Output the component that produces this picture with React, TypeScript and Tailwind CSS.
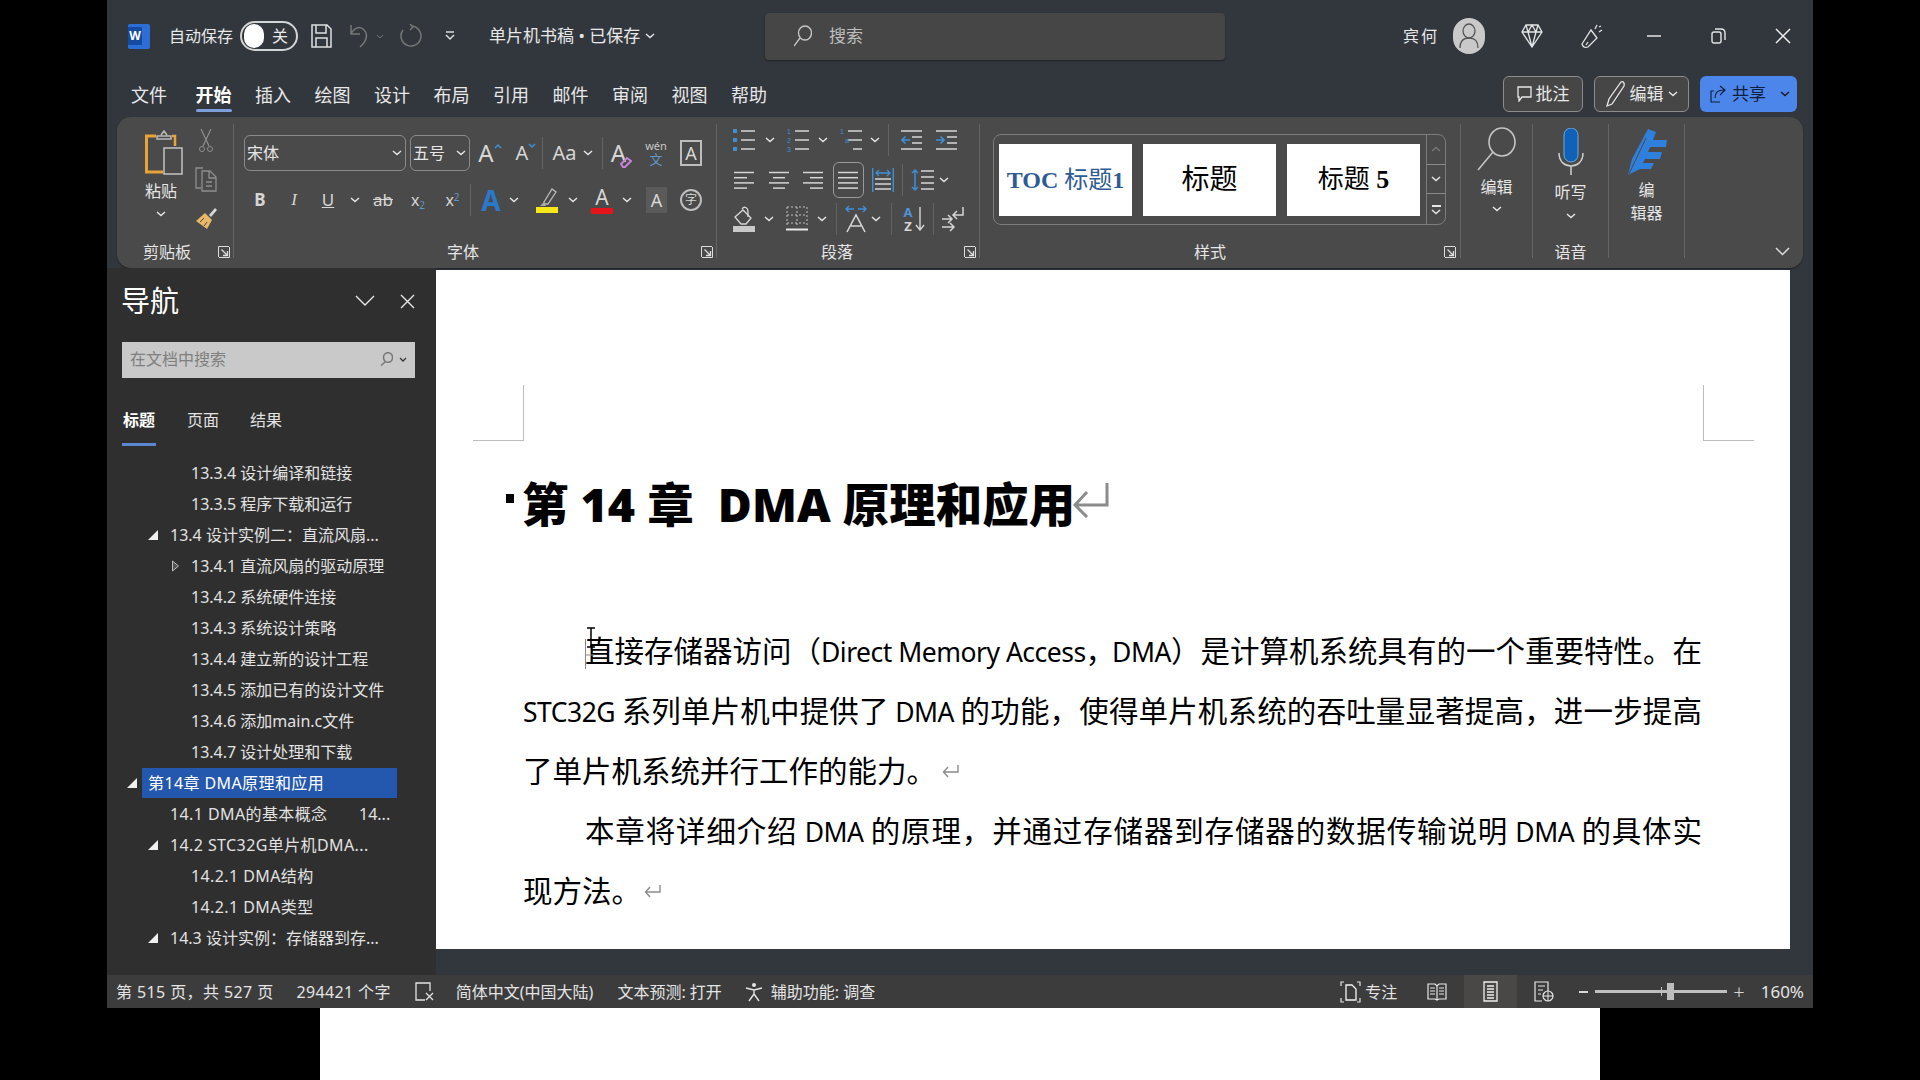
import React from "react";

const I = "#d6d6d6";
const BLUE = "#3f8fd6";

const Chev = ({ c = "" }: { c?: string }) => (
  <svg width="10" height="6" viewBox="0 0 10 6" className={`shrink-0 ${c}`}>
    <path d="M1 1l4 3.5L9 1" stroke="#e4e4e4" strokeWidth="1.5" fill="none" />
  </svg>
);

const Launcher = ({ c = "" }: { c?: string }) => (
  <svg width="12" height="12" viewBox="0 0 12 12" className={`shrink-0 ${c}`}>
    <path d="M.5 11V.5H11" stroke="#ddd" fill="none" />
    <path d="M3.5 3.5l6 6M9.5 5v4.5H5" stroke="#ddd" strokeWidth="1.3" fill="none" />
    <path d="M1 11.5h10.5V1" stroke="#ddd" fill="none" />
  </svg>
);

const Lines = ({ kind }: { kind: "left" | "center" | "right" | "full" }) => {
  const rows = {
    left: [[0, 20], [0, 13], [0, 20], [0, 13]],
    center: [[0, 20], [4, 16], [0, 20], [4, 16]],
    right: [[0, 20], [7, 20], [0, 20], [7, 20]],
    full: [[0, 20], [0, 20], [0, 20], [0, 20]],
  }[kind];
  return (
    <svg width="21" height="21" viewBox="0 0 21 21" className="shrink-0">
      {rows.map((r, i) => (
        <path key={i} d={`M${r[0]} ${2.5 + i * 5.2}H${r[1]}`} stroke={I} strokeWidth="1.5" />
      ))}
    </svg>
  );
};

const ListIcon = ({ type }: { type: "bullet" | "num" | "multi" }) => (
  <svg width="22" height="26" viewBox="0 0 22 26" className="shrink-0">
    {[4, 13, 22].map((y, i) => (
      <path key={y} d={`M${type === "multi" && i === 2 ? 13 : 8} ${y}H22`} stroke={I} strokeWidth="1.5" />
    ))}
    {type === "bullet" && [4, 13, 22].map((y) => <rect key={y} x="0" y={y - 2} width="4" height="4" fill={BLUE} />)}
    {type !== "bullet" && (
      <g fill={BLUE} fontSize="7" fontFamily="Liberation Sans">
        <text x="0" y="7">1</text>
        <text x={type === "multi" ? 5 : 0} y="16">{type === "multi" ? "a" : "2"}</text>
        {type === "num" && <text x="0" y="25">3</text>}
      </g>
    )}
  </svg>
);

const Indent = ({ out }: { out?: boolean }) => (
  <svg width="21" height="24" viewBox="0 0 21 24" className="shrink-0">
    <path d="M0 3h21M11 9h10M11 15h10M0 21h21" stroke={I} strokeWidth="1.5" />
    <path d={out ? "M9 12H1m3.500-3.500L1 12l3.500 3.500" : "M0 12h8m-3.500-3.500L8 12l-3.500 3.500"} stroke={BLUE} strokeWidth="1.600" fill="none" />
  </svg>
);

const Sep = ({ c = "" }: { c?: string }) => <div className={`w-px h-[32px] bg-[#636363] shrink-0 ${c}`} />;

const Group = ({ w, children, label }: { w: string; children?: React.ReactNode; label?: string }) => (
  <div className={`${w} h-[134px] shrink-0 flex flex-col border-r border-[#666]`}>
    <div className="h-[116px] shrink-0">{children}</div>
    <div className="h-[24px] shrink-0 flex items-center justify-center text-[16px] text-[#e6e6e6]">
      <span>{label}</span>
    </div>
  </div>
);

const ClipboardGroup = () => (
  <div className="w-[117px] h-[134px] shrink-0 flex flex-col border-r border-[#666]">
    <div className="h-[116px] flex shrink-0">
      <div className="ml-[24px] w-[40px] flex flex-col items-center">
        <svg width="38" height="46" viewBox="0 0 38 46" className="mt-[6px] ml-[6px] shrink-0">
          <path d="M11 6H1.500v36H18" stroke="#e9a436" strokeWidth="3" fill="none" />
          <path d="M12 6h14v3H12zM16 5l3-4 3 4" stroke="#bbb" strokeWidth="1.500" fill="none" />
          <path d="M27 6h3v10" stroke="#e9a436" strokeWidth="2.500" fill="none" />
          <rect x="19" y="18" width="18" height="26" fill="#4a4a4a" stroke="#c4c4c4" strokeWidth="1.500" />
        </svg>
        <span className="text-[16px] leading-[20px] mt-[5px] text-[#e6e6e6]">粘贴</span>
        <Chev c="mt-[10px]" />
      </div>
      <div className="ml-[13px] w-[24px] flex flex-col items-center">
        <svg width="14" height="24" viewBox="0 0 14 24" className="mt-[5px]">
          <path d="M2 0l8 17M12 0L4 17" stroke="#8e8e8e" strokeWidth="1.200" fill="none" />
          <circle cx="3" cy="20" r="2.500" stroke="#8e8e8e" fill="none" />
          <circle cx="11" cy="20" r="2.500" stroke="#8e8e8e" fill="none" />
        </svg>
        <svg width="22" height="25" viewBox="0 0 22 25" className="mt-[14px]">
          <path d="M6 21H1V1h7" stroke="#8e8e8e" strokeWidth="1.300" fill="none" />
          <path d="M7 4h8l6 6v14H7zM14 4v7h7M11 15h6M11 19h6" stroke="#8e8e8e" strokeWidth="1.300" fill="none" />
        </svg>
        <svg width="23" height="24" viewBox="0 0 23 24" className="mt-[14px]">
          <path d="M14 9l6-7 2 2-6 7z" fill="#d8d8d8" />
          <path d="M10 7l7 7-5 9-11-8z" fill="#e8b868" />
          <path d="M5 16l4-4M9 20l3-4" stroke="#4a4a4a" />
        </svg>
      </div>
    </div>
    <div className="h-[24px] shrink-0 flex items-center text-[16px] text-[#e6e6e6]">
      <span className="ml-[26px]">剪贴板</span>
      <Launcher c="ml-[27px]" />
    </div>
  </div>
);

const FontGroup = () => (
  <div className="w-[483px] h-[134px] shrink-0 flex flex-col border-r border-[#666] text-[#d6d6d6]">
    <div className="h-[116px] shrink-0 pt-[11px]">
      <div className="flex h-[36px] items-center">
        <div className="ml-[10px] w-[162px] h-[36px] border border-[#8a8a8a] rounded-md flex items-center justify-between pl-[2px] pr-[3px] text-[16px] text-[#e6e6e6]">
          <span>宋体</span><Chev />
        </div>
        <div className="ml-[4px] w-[60px] h-[36px] border border-[#8a8a8a] rounded-md flex items-center justify-between pl-[2px] pr-[3px] text-[16px] text-[#e6e6e6]">
          <span>五号</span><Chev />
        </div>
        <div className="w-[40px] flex justify-center items-start">
          <span className="text-[24px] leading-[32px]">A</span>
          <svg width="8" height="6" viewBox="0 0 8 6" className="mt-[6px]"><path d="M1 5l3-3 3 3" stroke={BLUE} strokeWidth="1.500" fill="none" /></svg>
        </div>
        <div className="w-[32px] flex justify-center items-start">
          <span className="text-[20px] leading-[32px]">A</span>
          <svg width="8" height="6" viewBox="0 0 8 6" className="mt-[6px]"><path d="M1 1l3 3 3-3" stroke={BLUE} strokeWidth="1.500" fill="none" /></svg>
        </div>
        <Sep />
        <div className="w-[59px] flex justify-center items-center gap-[6px]">
          <span className="text-[20px] leading-[28px]">Aa</span><Chev />
        </div>
        <Sep />
        <div className="w-[37px] flex justify-center">
          <div className="flex items-end">
            <span className="text-[24px] leading-[30px]">A</span>
            <svg width="12" height="12" viewBox="0 0 12 12" className="-ml-[6px]">
              <path d="M1 8l6-6 4 3-6 6H3z" fill="none" stroke="#c583d6" strokeWidth="2" />
            </svg>
          </div>
        </div>
        <div className="w-[32px] flex flex-col items-center">
          <span className="text-[11px] leading-[13px] text-[#c8c8c8]">wén</span>
          <span className="text-[13px] leading-[15px] text-[#5f97c9]">文</span>
        </div>
        <div className="ml-[8px] w-[22px] h-[26px] border-2 border-[#bdbdbd] flex items-center justify-center text-[18px] leading-[22px]">A</div>
      </div>
      <div className="flex h-[30px] mt-[14px] items-center">
        <div className="ml-[9px] w-[34px] text-center text-[17px] font-bold">B</div>
        <div className="w-[34px] text-center text-[17px] italic [font-family:'Liberation_Serif',serif]">I</div>
        <div className="w-[34px] text-center text-[17px] underline">U</div>
        <div className="w-[20px] flex justify-center"><Chev /></div>
        <div className="w-[36px] text-center text-[17px] line-through">ab</div>
        <div className="w-[34px] text-center text-[16px]">x<sub className="text-[10px] text-[#5f97c9]">2</sub></div>
        <div className="w-[35px] text-center text-[16px]">x<sup className="text-[10px] text-[#5f97c9]">2</sup></div>
        <Sep />
        <div className="ml-[3px] w-[34px] text-center text-[28px] leading-[30px] font-bold text-[#2b78c8]">A</div>
        <Chev c="ml-[1px]" />
        <div className="ml-[13px] w-[30px] flex justify-center">
          <svg width="22" height="26" viewBox="0 0 22 26">
            <path d="M8 15L16 2l4 3-8 12H8z" stroke="#bbb" strokeWidth="1.300" fill="none" />
            <path d="M8 15l-4 4h6z" fill="#aaa" />
            <rect x="0" y="20" width="22" height="6" fill="#f6e719" />
          </svg>
        </div>
        <Chev c="ml-[6px]" />
        <div className="ml-[9px] w-[30px] flex flex-col items-center">
          <span className="text-[21px] leading-[21px]">A</span>
          <div className="w-[22px] h-[6px] bg-[#e5141a]" />
        </div>
        <Chev c="ml-[5px]" />
        <div className="ml-[14px] w-[21px] h-[26px] bg-[#5a5a5a] flex items-center justify-center text-[18px]">A</div>
        <div className="ml-[13px] w-[22px] h-[22px] rounded-full border-2 border-[#bdbdbd] flex items-center justify-center text-[12px]">字</div>
      </div>
    </div>
    <div className="h-[24px] shrink-0 flex items-center text-[16px] text-[#e6e6e6]">
      <span className="ml-[213px]">字体</span>
      <Launcher c="ml-[222px]" />
    </div>
  </div>
);

const ParaGroup = () => (
  <div className="w-[263px] h-[134px] shrink-0 flex flex-col border-r border-[#666]">
    <div className="h-[116px] shrink-0">
      <div className="flex h-[32px] items-center">
        <div className="ml-[16px]"><ListIcon type="bullet" /></div>
        <Chev c="ml-[10px]" />
        <div className="ml-[12px]"><ListIcon type="num" /></div>
        <Chev c="ml-[9px]" />
        <div className="ml-[12px]"><ListIcon type="multi" /></div>
        <Chev c="ml-[8px]" />
        <Sep c="ml-[8px]" />
        <div className="ml-[12px]"><Indent out /></div>
        <div className="ml-[14px]"><Indent /></div>
      </div>
      <div className="flex h-[32px] items-center mt-[8px]">
        <div className="ml-[17px]"><Lines kind="left" /></div>
        <div className="ml-[14px]"><Lines kind="center" /></div>
        <div className="ml-[13px]"><Lines kind="right" /></div>
        <div className="ml-[9px] w-[31px] h-[36px] border border-[#9a9a9a] rounded-md flex items-center justify-center"><Lines kind="full" /></div>
        <svg width="22" height="24" viewBox="0 0 22 24" className="ml-[8px] shrink-0">
          <path d="M.7 0v24M21.300 0v24" stroke={BLUE} strokeWidth="1.400" />
          <path d="M4 5h14m-3-3l3 3-3 3M7 2L4 5l3 3" stroke={BLUE} strokeWidth="1.300" fill="none" />
          <path d="M3 11h16M3 16h16M3 21h16" stroke={I} strokeWidth="1.500" />
        </svg>
        <Sep c="ml-[8px]" />
        <svg width="23" height="24" viewBox="0 0 23 24" className="ml-[8px] shrink-0">
          <path d="M4 2v20M1 5l3-3 3 3M1 19l3 3 3-3" stroke={BLUE} strokeWidth="1.500" fill="none" />
          <path d="M10 3h13M10 9h13M10 15h13M10 21h13" stroke={I} strokeWidth="1.500" />
        </svg>
        <Chev c="ml-[5px]" />
      </div>
      <div className="flex h-[32px] items-center mt-[7px]">
        <svg width="23" height="26" viewBox="0 0 23 26" className="ml-[16px] shrink-0">
          <path d="M2 11l8-7 8 8-5 6-5 0z" stroke="#d8d8d8" strokeWidth="1.300" fill="none" />
          <path d="M9 3c2-3 6-2 6 3v5" stroke="#d8d8d8" strokeWidth="1.300" fill="none" />
          <rect x="0" y="20" width="22" height="6" fill="#c9c9c9" />
        </svg>
        <Chev c="ml-[8px]" />
        <svg width="22" height="26" viewBox="0 0 22 26" className="ml-[12px] shrink-0">
          <path d="M1 1h20M1 9h20M1 17h20M1 1v19M11 1v19M21 1v19" stroke="#c0c0c0" strokeDasharray="2 2" />
          <path d="M0 23.500h22" stroke="#e8e8e8" strokeWidth="2" />
        </svg>
        <Chev c="ml-[9px]" />
        <Sep c="ml-[9px]" />
        <svg width="22" height="28" viewBox="0 0 22 28" className="ml-[8px] shrink-0">
          <path d="M1 4h8M4 1L1 4l3 3M21 4h-8M18 1l3 3-3 3" stroke={BLUE} strokeWidth="1.400" fill="none" />
          <path d="M2 27l9-17 9 17M6 21h10" stroke={I} strokeWidth="1.600" fill="none" />
        </svg>
        <Chev c="ml-[4px]" />
        <Sep c="ml-[10px]" />
        <div className="ml-[10px] w-[12px] flex flex-col items-center text-[13px] font-bold">
          <span className="h-[14px] leading-[14px] text-[#4c94d8]">A</span><span className="h-[14px] leading-[14px] text-[#d6d6d6]">Z</span>
        </div>
        <svg width="10" height="24" viewBox="0 0 10 24" className="ml-[1px] shrink-0"><path d="M5 0v23M1 18l4 5 4-5" stroke={I} strokeWidth="1.400" fill="none" /></svg>
        <Sep c="ml-[8px]" />
        <svg width="22" height="26" viewBox="0 0 22 26" className="ml-[8px] shrink-0">
          <path d="M21 1v8h-9M15 5l-4 4 4 4" stroke={I} strokeWidth="1.500" fill="none" />
          <path d="M0 13h9M6 9l4 4-4 4M0 21h12M8 17l4 4-4 4" stroke={I} strokeWidth="1.500" fill="none" />
        </svg>
      </div>
    </div>
    <div className="h-[24px] shrink-0 flex items-center text-[16px] text-[#e6e6e6]">
      <span className="ml-[104px]">段落</span>
      <Launcher c="ml-[111px]" />
    </div>
  </div>
);

const StyleTile = ({ children, c }: { children: React.ReactNode; c: string }) => (
  <div className={`w-[133px] h-[72px] bg-white flex items-center justify-center whitespace-pre [font-family:'Liberation_Serif','Noto_Sans_CJK_SC',serif] ${c}`}>{children}</div>
);

const StylesGroup = () => (
  <div className="w-[481px] h-[134px] shrink-0 flex flex-col border-r border-[#666]">
    <div className="h-[116px] shrink-0 pt-[10px]">
      <div className="ml-[13px] w-[453px] h-[91px] border border-[#7c7c7c] rounded-lg flex items-center pl-[5px]">
        <StyleTile c="text-[#2f5b94] text-[24px]"><b>TOC </b>标题<b>1</b></StyleTile>
        <StyleTile c="ml-[11px] text-black text-[28px]">标题</StyleTile>
        <StyleTile c="ml-[11px] text-black text-[26px]">标题 <b>5</b></StyleTile>
        <div className="ml-[6px] w-[19px] h-[91px] border-l border-[#7c7c7c] flex flex-col">
          <div className="h-[31px] flex items-center justify-center border-b border-[#8a8a8a]">
            <svg width="10" height="6" viewBox="0 0 10 6"><path d="M1 5l4-3.500L9 5" stroke="#777" strokeWidth="1.500" fill="none" /></svg>
          </div>
          <div className="h-[29px] flex items-center justify-center border-b border-[#8a8a8a]"><Chev /></div>
          <div className="flex-1 flex flex-col items-center justify-center gap-[2px]">
            <div className="w-[9px] h-[2px] bg-[#e4e4e4]" />
            <Chev />
          </div>
        </div>
      </div>
    </div>
    <div className="h-[24px] shrink-0 flex items-center text-[16px] text-[#e6e6e6]">
      <span className="ml-[214px]">样式</span>
      <Launcher c="ml-[218px]" />
    </div>
  </div>
);

const Ribbon = () => (
  <div className="mx-[10px] h-[151px] shrink-0 rounded-[14px] bg-[#4a4a4a] flex pt-[7px] shadow-[0_1px_2px_rgba(0,0,0,0.4)]">
    <ClipboardGroup />
    <FontGroup />
    <ParaGroup />
    <StylesGroup />
    <Group w="w-[72px]">
      <div className="flex flex-col items-center text-[16px] text-[#e6e6e6]">
        <svg width="40" height="44" viewBox="0 0 40 44" className="mt-[3px]">
          <ellipse cx="25" cy="15" rx="13" ry="14" stroke="#c4c4c4" strokeWidth="1.600" fill="none" />
          <path d="M16 25L1 43" stroke="#c4c4c4" strokeWidth="1.600" />
        </svg>
        <span className="leading-[20px] mt-[6px]">编辑</span>
        <Chev c="mt-[9px]" />
      </div>
    </Group>
    <Group w="w-[76px]" label="语音">
      <div className="flex flex-col items-center text-[16px] text-[#e6e6e6]">
        <svg width="26" height="48" viewBox="0 0 26 48" className="mt-[4px]">
          <rect x="6" y="0" width="14" height="34" rx="7" fill="#0f62b8" stroke="#72a6dc" />
          <path d="M1 25c0 9 6 13 12 13s12-4 12-13M13 38v9" stroke="#cfcfcf" strokeWidth="1.500" fill="none" />
        </svg>
        <span className="leading-[20px] mt-[6px]">听写</span>
        <Chev c="mt-[11px]" />
      </div>
    </Group>
    <Group w="w-[76px]">
      <div className="flex flex-col items-center text-[16px] leading-[23px] text-[#e6e6e6]">
        <svg width="40" height="48" viewBox="0 0 40 48" className="mt-[4px]">
          <path d="M1 47l4-16L21 1l8 3-3 8h14l-1 7H23l-2 5h14l-2 7H18l-2 4h11l-3 6H13z" fill="#2f7fdc" />
          <path d="M2 46L19 10" stroke="#4a4a4a" />
        </svg>
        <span className="mt-[3px]">编</span>
        <span>辑器</span>
      </div>
    </Group>
    <div className="flex-1 flex items-end justify-end pb-[12px] pr-[13px]">
      <svg width="15" height="9" viewBox="0 0 15 9"><path d="M1 1l6.500 6.500L14 1" stroke="#ddd" strokeWidth="1.500" fill="none" /></svg>
    </div>
  </div>
);

const TitleBar = () => (
  <div className="h-[72px] shrink-0 flex items-center text-[#e8e8e8] text-[16px]">
    <div className="ml-[21px] w-[22px] h-[25px] rounded-[2px] bg-[#2b6fd6] flex items-center">
      <span className="w-[14px] h-[18px] bg-[#154aa3] text-white text-[12px] font-bold leading-[18px] text-center">W</span>
    </div>
    <span className="ml-[19px]">自动保存</span>
    <div className="ml-[7px] w-[58px] h-[30px] rounded-full border-2 border-[#d4d4d4] flex items-center pl-[2px]">
      <div className="w-[20px] h-[24px] rounded-full bg-white" />
      <span className="ml-[8px]">关</span>
    </div>
    <svg width="21" height="24" viewBox="0 0 21 24" className="ml-[13px]">
      <path d="M1 1h15l4 4v18H1zM5 1v8h10V1M5 23v-9h11v9" stroke="#e0e0e0" strokeWidth="1.500" fill="none" />
    </svg>
    <svg width="22" height="24" viewBox="0 0 22 24" className="ml-[17px]">
      <path d="M2 1v9h9M2 10c3-6 8-8 12-5 5 4 5 11-3 18" stroke="#777" strokeWidth="1.500" fill="none" />
    </svg>
    <svg width="8" height="5" viewBox="0 0 8 5" className="ml-[5px]"><path d="M1 1l3 3 3-3" stroke="#777" fill="none" /></svg>
    <svg width="22" height="24" viewBox="0 0 22 24" className="ml-[16px]">
      <path d="M11 2a10 10 0 1 1-8 4M10 0l3 3-3 3" stroke="#777" strokeWidth="1.500" fill="none" />
    </svg>
    <svg width="10" height="10" viewBox="0 0 10 10" className="ml-[23px]">
      <path d="M1 1h8" stroke="#ddd" strokeWidth="1.500" /><path d="M1 4l4 4 4-4" stroke="#ddd" strokeWidth="1.500" fill="none" />
    </svg>
    <span className="ml-[34px] w-[150px] whitespace-nowrap text-[17px]">单片机书稿 • 已保存</span>
    <Chev c="ml-[6px]" />
    <div className="ml-[110px] w-[460px] h-[47px] rounded-[4px] bg-[#464646] shadow-[0_1px_2px_rgba(0,0,0,0.4)] flex items-center">
      <svg width="18" height="22" viewBox="0 0 18 22" className="ml-[29px]">
        <ellipse cx="11" cy="8" rx="6.500" ry="7" stroke="#c8c8c8" strokeWidth="1.300" fill="none" />
        <path d="M6 13l-6 8" stroke="#c8c8c8" strokeWidth="1.300" />
      </svg>
      <span className="ml-[17px] text-[#bdbdbd] text-[17px]">搜索</span>
    </div>
    <span className="ml-[178px] tracking-[2px]">宾何</span>
    <div className="ml-[14px] w-[32px] h-[36px] rounded-full bg-[#c9c9c9] flex items-center justify-center">
      <svg width="22" height="26" viewBox="0 0 22 26">
        <ellipse cx="11" cy="8" rx="6" ry="7" stroke="#555" strokeWidth="1.300" fill="none" />
        <path d="M2 25c0-7 3-10 9-10s9 3 9 10" stroke="#555" strokeWidth="1.300" fill="none" />
      </svg>
    </div>
    <svg width="22" height="24" viewBox="0 0 22 24" className="ml-[36px]">
      <path d="M5 1h12l4 7-10 15L1 8zM1 8h20M7 8l4 15 4-15M5 1l2 7 4-7 4 7 2-7" stroke="#e4e4e4" strokeWidth="1.300" fill="none" />
    </svg>
    <svg width="22" height="26" viewBox="0 0 22 26" className="ml-[38px]">
      <path d="M1 21L10 7l6 8-9 9c-3 1-5 0-6-3zM5 22l2-3" stroke="#e4e4e4" strokeWidth="1.300" fill="none" />
      <path d="M14 6l2-4M18 9l3-2M20 3l-2 1" stroke="#e4e4e4" strokeWidth="1.300" />
    </svg>
    <svg width="14" height="2" viewBox="0 0 14 2" className="ml-[44px]"><path d="M0 1h14" stroke="#e4e4e4" strokeWidth="1.500" /></svg>
    <svg width="15" height="16" viewBox="0 0 15 16" className="ml-[50px]">
      <rect x="1" y="4" width="9" height="11" rx="2" stroke="#e4e4e4" strokeWidth="1.400" fill="none" />
      <path d="M4 1h6c3 0 4 1 4 4v7" stroke="#e4e4e4" strokeWidth="1.400" fill="none" />
    </svg>
    <svg width="16" height="16" viewBox="0 0 16 16" className="ml-[49px]"><path d="M1 1l14 14M15 1L1 15" stroke="#f0f0f0" strokeWidth="1.500" /></svg>
  </div>
);

const tabs = ["文件", "开始", "插入", "绘图", "设计", "布局", "引用", "邮件", "审阅", "视图", "帮助"];

const TabRow = () => (
  <div className="h-[45px] shrink-0 flex text-[18px] text-[#e8e8e8]">
    <div className="ml-[24px] flex gap-[23.500px]">
      {tabs.map((t) => (
        <div key={t} className={`h-[40px] pt-[6px] flex flex-col items-center justify-center relative ${t === "文件" ? "mr-[5px]" : ""}`}>
          <span className={t === "开始" ? "font-bold text-white" : ""}>{t}</span>
          {t === "开始" && <div className="absolute bottom-0 w-[36px] h-[3px] bg-[#7d9fdc] rounded-full" />}
        </div>
      ))}
    </div>
    <div className="ml-auto mr-[16px] mt-[4px] flex gap-[11px] text-[17px]">
      <div className="w-[80px] h-[36px] border border-[#8c8c8c] rounded-md bg-[#464646] flex items-center justify-center gap-[4px]">
        <svg width="15" height="16" viewBox="0 0 15 16"><path d="M1 1h13v10H5l-3 4v-4H1z" stroke="#e8e8e8" strokeWidth="1.300" fill="none" /></svg>
        <span>批注</span>
      </div>
      <div className="w-[95px] h-[36px] border border-[#8c8c8c] rounded-md bg-[#464646] flex items-center justify-center gap-[4px]">
        <svg width="20" height="28" viewBox="0 0 20 28"><path d="M1 26l2-7L15 2c2-1 4 1 3 4L6 24z" stroke="#e8e8e8" strokeWidth="1.300" fill="none" /></svg>
        <span>编辑</span>
        <Chev />
      </div>
      <div className="w-[97px] h-[36px] rounded-md bg-[#4d86ea] text-[#10203c] flex items-center pl-[10px]">
        <svg width="16" height="18" viewBox="0 0 16 18"><path d="M10 1l5 4-5 5M15 5C7 5 5 8 5 13M10 17H1V6h3" stroke="#10203c" strokeWidth="1.200" fill="none" /></svg>
        <span className="ml-[6px]">共享</span>
        <Chev c="ml-[14px] invert" />
      </div>
    </div>
  </div>
);

type Row = { t: string; l: 1 | 2 | 3; tri?: boolean; hollow?: boolean; sel?: boolean; tail?: string };

const rows: Row[] = [
  { t: "13.3.4 设计编译和链接", l: 3 },
  { t: "13.3.5 程序下载和运行", l: 3 },
  { t: "13.4 设计实例二：直流风扇...", l: 2, tri: true },
  { t: "13.4.1 直流风扇的驱动原理", l: 3, hollow: true },
  { t: "13.4.2 系统硬件连接", l: 3 },
  { t: "13.4.3 系统设计策略", l: 3 },
  { t: "13.4.4 建立新的设计工程", l: 3 },
  { t: "13.4.5 添加已有的设计文件", l: 3 },
  { t: "13.4.6 添加main.c文件", l: 3 },
  { t: "13.4.7 设计处理和下载", l: 3 },
  { t: "第14章 DMA原理和应用", l: 1, tri: true, sel: true },
  { t: "14.1 DMA的基本概念", l: 2, tail: "14..." },
  { t: "14.2 STC32G单片机DMA...", l: 2, tri: true },
  { t: "14.2.1 DMA结构", l: 3 },
  { t: "14.2.1 DMA类型", l: 3 },
  { t: "14.3 设计实例：存储器到存...", l: 2, tri: true },
];

const Tri = ({ c }: { c: string }) => (
  <svg width="10" height="10" viewBox="0 0 10 10" className={`shrink-0 ${c}`}><path d="M10 0v10H0z" fill="#f0f0f0" /></svg>
);

const NavRow = ({ r }: { r: Row }) => {
  const sp = r.t.includes("DMA") ? "tracking-[0.4px]" : "";
  if (r.sel) {
    return (
      <div className="h-[31px] flex items-center text-white">
        <Tri c="ml-[20px]" />
        <div className={`ml-[5px] w-[255px] h-[30px] bg-[#2458ae] flex items-center pl-[6px] ${sp}`}>{r.t}</div>
      </div>
    );
  }
  if (r.l === 2) {
    return (
      <div className="h-[31px] flex items-center">
        {r.tri ? <Tri c="ml-[41px]" /> : <div className="ml-[41px] w-[10px]" />}
        <span className={`ml-[12px] whitespace-nowrap ${sp} ${r.tail ? "w-[189px]" : ""}`}>{r.t}</span>
        {r.tail && <span>{r.tail}</span>}
      </div>
    );
  }
  return (
    <div className="h-[31px] flex items-center">
      {r.hollow ? (
        <svg width="7" height="12" viewBox="0 0 7 12" className="ml-[65px] shrink-0"><path d="M.5 1l6 5-6 5z" stroke="#bbb" fill="#555" /></svg>
      ) : (
        <div className="ml-[65px] w-[7px]" />
      )}
      <span className={`ml-[12px] whitespace-nowrap ${sp}`}>{r.t}</span>
    </div>
  );
};

const NavPane = () => (
  <div className="w-[329px] h-full shrink-0 bg-[#2f2f2f] text-[#e2e2e2] text-[16px] flex flex-col">
    <div className="h-[64px] pt-[2px] shrink-0 flex items-center pl-[14px]">
      <span className="text-[29px] text-white">导航</span>
      <svg width="20" height="12" viewBox="0 0 20 12" className="ml-[176px]"><path d="M1 1l9 9 9-9" stroke="#e8e8e8" strokeWidth="1.400" fill="none" /></svg>
      <svg width="15" height="15" viewBox="0 0 15 15" className="ml-[25px]"><path d="M1 1l13 13M14 1L1 14" stroke="#e8e8e8" strokeWidth="1.400" /></svg>
    </div>
    <div className="mt-[10px] ml-[15px] w-[293px] h-[36px] shrink-0 bg-[#c9c9c9] flex items-center pl-[8px] pr-[8px] pb-[2px] text-[#7f7f7f]">
      <span>在文档中搜索</span>
      <svg width="13" height="14" viewBox="0 0 13 14" className="ml-auto"><ellipse cx="8" cy="5.500" rx="4.500" ry="4.800" stroke="#777" strokeWidth="1.500" fill="none" /><path d="M5 10l-4 3.500" stroke="#777" strokeWidth="1.500" /></svg>
      <svg width="8" height="5" viewBox="0 0 8 5" className="ml-[6px]"><path d="M1 1l3 3 3-3" stroke="#333" strokeWidth="1.300" fill="none" /></svg>
    </div>
    <div className="mt-[27px] h-[38px] shrink-0 flex pl-[15px] gap-[31px] items-start">
      <div className="flex flex-col items-center font-bold text-white">
        <span className="h-[32px] leading-[30px]">标题</span>
        <div className="mt-[6px] w-[34px] h-[3px] bg-[#5b86d0]" />
      </div>
      <span className="h-[32px] leading-[30px]">页面</span>
      <span className="h-[32px] leading-[30px]">结果</span>
    </div>
    <div className="mt-[14px]">
      {rows.map((r) => <NavRow key={r.t + r.l + r.tail} r={r} />)}
    </div>
  </div>
);

const Ret = ({ c = "" }: { c?: string }) => (
  <svg width="18" height="14" viewBox="0 0 18 14" className={`shrink-0 ${c}`}>
    <path d="M16 1v7H2M6 3L1.500 8 6 13" stroke="#8c8c8c" strokeWidth="1.400" fill="none" />
  </svg>
);

const Line = ({ children, c = "" }: { children: React.ReactNode; c?: string }) => (
  <div className={`h-[60px] flex items-center ${c}`}>{children}</div>
);

const Just = ({ children }: { children: React.ReactNode }) => (
  <div className="w-full text-justify [text-align-last:justify] whitespace-nowrap">{children}</div>
);

const Latin = ({ children }: { children: React.ReactNode }) => (
  <span className="text-[26.500px] tracking-[-0.5px]">{children}</span>
);

const Doc = () => (
  <div className="flex-1 flex flex-col h-full pt-[2px]">
    <div className="w-[1354px] h-[679px] bg-white text-black overflow-hidden">
      <div className="flex justify-between pt-[115px] pl-[37px] pr-[36px]">
        <div className="w-[51px] h-[56px] border-r border-b border-[#bdbdbd]" />
        <div className="w-[51px] h-[56px] border-l border-b border-[#bdbdbd]" />
      </div>
      <div className="h-[126px] flex items-center pl-[70px]">
        <div className="w-[8px] h-[9px] bg-black mb-[12px] mr-[8px] shrink-0" />
        <span className="text-[46.500px] font-black leading-none whitespace-pre">第 14 章  DMA 原理和应用</span>
        <svg width="36" height="36" viewBox="0 0 36 36" className="-ml-[2px] mb-[8px]">
          <path d="M34 1v22H3M14 10L2 23l12 12" stroke="#8c8c8c" strokeWidth="3" fill="none" />
        </svg>
      </div>
      <div className="pl-[87px] pr-[88px] mt-[54px] text-[29.500px] leading-none">
        <div className="relative">
          <Line c="pl-[62px]">
            <Just>直接存储器访问（<Latin>Direct Memory Access</Latin><span className="-mr-[3px]">，</span><Latin>DMA</Latin>）是计算机系统具有的一个重要特性。在</Just>
          </Line>
          <svg width="12" height="42" viewBox="0 0 12 42" className="absolute left-[62px] top-[6px]">
            <path d="M2 1h8M2 20h8M6 1v19" stroke="#000" strokeWidth="1.500" fill="none" />
            <path d="M0 28h9M0.500 12v30" stroke="#888" strokeWidth="1" />
          </svg>
        </div>
        <Line>
          <Just><Latin>STC32G </Latin>系列单片机中提供了<Latin> DMA </Latin>的功能，使得单片机系统的吞吐量显著提高，进一步提高</Just>
        </Line>
        <Line>
          <span>了单片机系统并行工作的能力。</span><Ret c="ml-[6px]" />
        </Line>
        <Line c="pl-[62px]">
          <Just>本章将详细介绍<Latin> DMA </Latin>的原理，并通过存储器到存储器的数据传输说明<Latin> DMA </Latin>的具体实</Just>
        </Line>
        <Line>
          <span>现方法。</span><Ret c="ml-[3px]" />
        </Line>
      </div>
    </div>
  </div>
);

const StatusBar = () => (
  <div className="h-[33px] shrink-0 bg-[#3c3c3c] flex items-center text-[16px] text-[#e4e4e4] whitespace-nowrap">
    <span className="ml-[9px] tracking-[0.4px]">第 515 页，共 527 页</span>
    <span className="ml-[23px] tracking-[0.35px]">294421 个字</span>
    <svg width="20" height="19" viewBox="0 0 20 19" className="ml-[24px]">
      <path d="M10 18H1V1h14v8" stroke="#e4e4e4" strokeWidth="1.300" fill="none" />
      <path d="M11 11l7 7M18 11l-7 7" stroke="#e4e4e4" strokeWidth="1.300" />
    </svg>
    <span className="ml-[21px]">简体中文(中国大陆)</span>
    <span className="ml-[24px]">文本预测: 打开</span>
    <svg width="18" height="20" viewBox="0 0 18 20" className="ml-[23px]">
      <circle cx="9" cy="3" r="2" fill="#e4e4e4" />
      <path d="M1 6l8 2 8-2M9 8v4M9 12l-5 7M9 12l5 7" stroke="#e4e4e4" strokeWidth="1.400" fill="none" />
    </svg>
    <span className="ml-[8px]">辅助功能: 调查</span>
    <svg width="21" height="22" viewBox="0 0 21 22" className="ml-auto">
      <path d="M1 5V1h3M17 1h3v4M1 17v4h3M17 21h3v-4" stroke="#e4e4e4" strokeWidth="1.200" fill="none" />
      <path d="M6 4h6l4 4v11H6z" stroke="#f4f4f4" strokeWidth="1.300" fill="none" />
    </svg>
    <span className="ml-[4px]">专注</span>
    <svg width="20" height="20" viewBox="0 0 20 20" className="ml-[30px]">
      <path d="M1 2h7l2 2 2-2h7v15h-7l-2 1-2-1H1zM10 4v14M3 6h5M3 9h5M3 12h5M12 6h5M12 9h5M12 12h5" stroke="#e8e8e8" strokeWidth="1.200" fill="none" />
    </svg>
    <div className="ml-[17px] w-[53px] h-[33px] bg-[#4a4747] flex items-center justify-center">
      <svg width="15" height="21" viewBox="0 0 15 21">
        <path d="M1 1h13v19H1zM4 5h7M4 8h7M4 11h7M4 14h7M4 17h7" stroke="#f0f0f0" strokeWidth="1.300" fill="none" />
      </svg>
    </div>
    <svg width="20" height="21" viewBox="0 0 20 21" className="ml-[17px]">
      <path d="M8 20H1V1h13v9M4 5h7M4 9h5M4 13h3" stroke="#e8e8e8" strokeWidth="1.200" fill="none" />
      <circle cx="14" cy="15" r="5" fill="#3c3c3c" stroke="#e8e8e8" strokeWidth="1.200" />
      <path d="M9 15h10M14 10v10" stroke="#e8e8e8" />
    </svg>
    <div className="ml-[25px] w-[9px] h-[2px] bg-[#d8d8d8]" />
    <div className="ml-[7px] w-[132px] h-[3px] bg-[#c0c0c0] flex items-center">
      <div className="ml-[66px] w-px h-[9px] bg-[#c0c0c0]" />
      <div className="ml-[5px] w-[7px] h-[17px] bg-[#bdbdbd]" />
    </div>
    <span className="ml-[6px] text-[20px] font-light leading-none text-[#d8d8d8]">+</span>
    <span className="ml-[16px] mr-[9px] text-[17px]">160%</span>
  </div>
);

export default function App() {
  return (
    <div className="w-[1920px] h-[1080px] bg-black overflow-hidden flex flex-col [font-family:'Noto_Sans','Noto_Sans_CJK_SC',sans-serif]">
      <div className="ml-[107px] w-[1706px] h-[1008px] shrink-0 bg-[#32373e] flex flex-col">
        <TitleBar />
        <TabRow />
        <Ribbon />
        <div className="flex flex-1 min-h-0">
          <NavPane />
          <Doc />
        </div>
        <StatusBar />
      </div>
      <div className="ml-[320px] w-[1280px] flex-1 bg-white" />
    </div>
  );
}
